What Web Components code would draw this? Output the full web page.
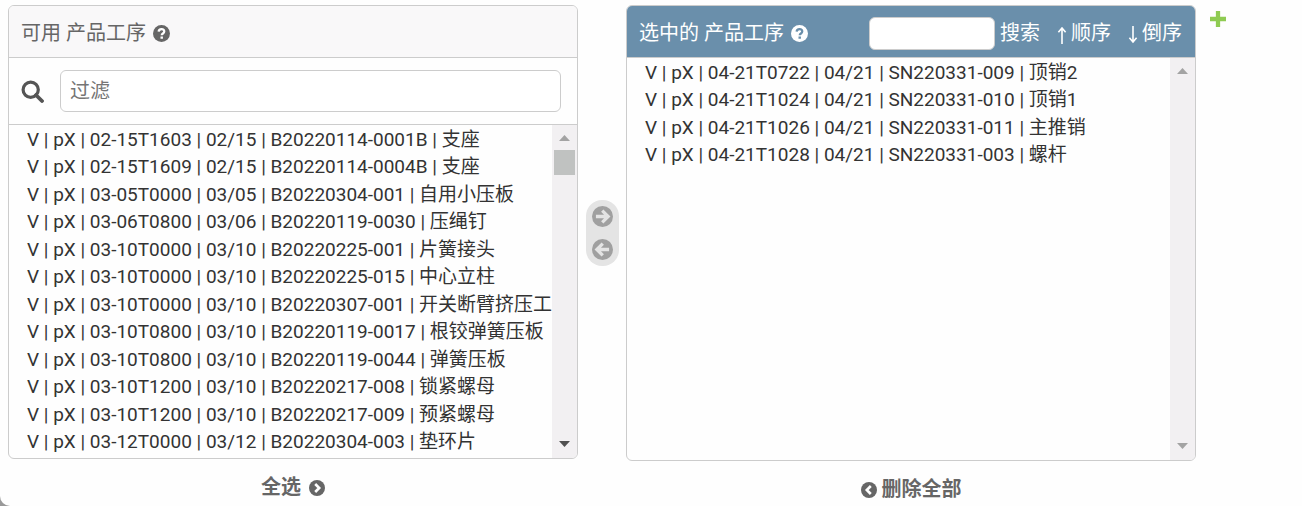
<!DOCTYPE html>
<html lang="zh-Hans">
<head>
<meta charset="utf-8">
<meta name="viewport" content="width=device-width, initial-scale=1">
<title>产品工序</title>
<style>
    html {
        background: #999;
    }

    body {
        margin: 0;
        font-family: Roboto, "Noto Sans CJK SC", sans-serif;
        font-size: 20px;
        line-height: 24px;
        color: #333;
    }
</style>
</head>
<body>
<related-widget>
    <selector-panel class="available" heading="可用 产品工序" source="available" thumb>
        <filter-box slot="filter"></filter-box>
    </selector-panel>
    <selector-chooser slot="chooser"></selector-chooser>
    <selector-panel class="chosen" slot="chosen" heading="选中的 产品工序" source="chosen">
        <sort-tools slot="tools"></sort-tools>
    </selector-panel>
    <bulk-link slot="choose-all" direction="right">全选</bulk-link>
    <bulk-link slot="remove-all" direction="left">删除全部</bulk-link>
</related-widget>

<script>
const LISTS = {
    available: [
        'V | pX | 02-15T1603 | 02/15 | B20220114-0001B | 支座',
        'V | pX | 02-15T1609 | 02/15 | B20220114-0004B | 支座',
        'V | pX | 03-05T0000 | 03/05 | B20220304-001 | 自用小压板',
        'V | pX | 03-06T0800 | 03/06 | B20220119-0030 | 压绳钉',
        'V | pX | 03-10T0000 | 03/10 | B20220225-001 | 片簧接头',
        'V | pX | 03-10T0000 | 03/10 | B20220225-015 | 中心立柱',
        'V | pX | 03-10T0000 | 03/10 | B20220307-001 | 开关断臂挤压工',
        'V | pX | 03-10T0800 | 03/10 | B20220119-0017 | 根铰弹簧压板',
        'V | pX | 03-10T0800 | 03/10 | B20220119-0044 | 弹簧压板',
        'V | pX | 03-10T1200 | 03/10 | B20220217-008 | 锁紧螺母',
        'V | pX | 03-10T1200 | 03/10 | B20220217-009 | 预紧螺母',
        'V | pX | 03-12T0000 | 03/12 | B20220304-003 | 垫环片'
    ],
    chosen: [
        'V | pX | 04-21T0722 | 04/21 | SN220331-009 | 顶销2',
        'V | pX | 04-21T1024 | 04/21 | SN220331-010 | 顶销1',
        'V | pX | 04-21T1026 | 04/21 | SN220331-011 | 主推销',
        'V | pX | 04-21T1028 | 04/21 | SN220331-003 | 螺杆'
    ]
};

// Round icon with a cut-out glyph: help, arrows and chevrons
class RoundIcon extends HTMLElement {
    constructor() {
        super();
        this.attachShadow({ mode: 'open' });
        const glyphs = {
            help: '<path d="M5.3 6.3C5.4 4.7 6.5 3.8 8 3.8c1.5 0 2.6.9 2.6 2.3 0 1.9-2.4 1.9-2.4 3.6" stroke-width="2.1"/><path d="M8.2 10.8v2.2" stroke-width="2.3"/>',
            'arrow-right': '<path d="M3 8h8.8M7.8 3.5 12.3 8l-4.5 4.5" stroke-width="2.5"/>',
            'arrow-left': '<path d="M13 8H4.2M8.2 3.5 3.7 8l4.5 4.5" stroke-width="2.5"/>',
            'chevron-right': '<path d="M6.2 4 10.2 8l-4 4" stroke-width="2.6"/>',
            'chevron-left': '<path d="M9.8 4 5.8 8l4 4" stroke-width="2.6"/>'
        };
        this.shadowRoot.innerHTML = `
            <style>
                :host {
                    display: block;
                    flex: none;
                    width: var(--icon-size, 17px);
                    height: var(--icon-size, 17px);
                }
                svg {
                    display: block;
                    width: 100%;
                    height: 100%;
                }
                circle { fill: var(--icon-color, #666); }
                path { fill: none; stroke: var(--icon-glyph, #fff); }
            </style>
            <svg viewBox="0 0 16 16" aria-hidden="true">
                <circle cx="8" cy="8" r="8"/>
                ${glyphs[this.getAttribute('name')] || ''}
            </svg>
        `;
    }
}

class ScrollRail extends HTMLElement {
    constructor() {
        super();
        this.attachShadow({ mode: 'open' });
        this.shadowRoot.innerHTML = `
            <style>
                :host {
                    display: flex;
                    flex-direction: column;
                    align-items: center;
                    flex: none;
                    width: 25px;
                    background: #f2f0f2;
                }
                svg {
                    flex: none;
                    display: block;
                    width: 11px;
                    height: 6px;
                    margin: 10px 0 9px;
                    fill: #a3a3a3;
                }
                .down { margin-bottom: 11px; }
                .thumb {
                    display: none;
                    width: 21px;
                    height: 25px;
                    background: #c0c2c1;
                }
                .space { flex: 1; }
                :host([thumb]) .thumb { display: block; }
                :host([thumb]) .down { fill: #505050; }
            </style>
            <svg viewBox="0 0 11 6" aria-hidden="true"><path d="M0 6 5.5 0 11 6z"/></svg>
            <div class="thumb"></div>
            <div class="space"></div>
            <svg class="down" viewBox="0 0 11 6" aria-hidden="true"><path d="M0 0h11L5.5 6z"/></svg>
        `;
    }
}

class FilterBox extends HTMLElement {
    constructor() {
        super();
        this.attachShadow({ mode: 'open' });
        this.shadowRoot.innerHTML = `
            <style>
                :host {
                    display: flex;
                    align-items: center;
                    gap: 16px;
                    padding: 12px 16px 12px 12px;
                    border-bottom: 1px solid #ccc;
                }
                svg {
                    display: block;
                    width: 23px;
                    height: 23px;
                    fill: none;
                    stroke: #555;
                }
                input {
                    box-sizing: border-box;
                    flex: 1;
                    min-width: 0;
                    height: 42px;
                    padding: 0 9px;
                    border: 1px solid #ccc;
                    border-radius: 6px;
                    background: #fff;
                    color: #333;
                    font: inherit;
                }
                input::placeholder { color: #757575; }
            </style>
            <label for="filter" aria-label="过滤">
                <svg viewBox="0 0 23 23" aria-hidden="true">
                    <circle cx="9.7" cy="9.7" r="7.6" stroke-width="3.2"/>
                    <path d="m15 15 6 6" stroke-width="3.8" stroke-linecap="round"/>
                </svg>
            </label>
            <input id="filter" type="text" placeholder="过滤">
        `;
    }
}

class SortTools extends HTMLElement {
    constructor() {
        super();
        this.attachShadow({ mode: 'open' });
        this.shadowRoot.innerHTML = `
            <style>
                :host {
                    display: flex;
                    align-items: center;
                    gap: 16px;
                    white-space: nowrap;
                }
                .search {
                    display: flex;
                    align-items: center;
                    gap: 5px;
                }
                input {
                    box-sizing: border-box;
                    width: 126px;
                    height: 33px;
                    padding: 0 8px;
                    border: 1px solid #ccc;
                    border-radius: 6px;
                    background: #fff;
                    font: inherit;
                }
                a {
                    display: flex;
                    align-items: center;
                    gap: 3px;
                    color: inherit;
                    text-decoration: none;
                }
                svg {
                    width: 12px;
                    height: 18px;
                    margin-top: 4px;
                    fill: none;
                    stroke: currentColor;
                    stroke-width: 1.6;
                }
            </style>
            <div class="search">
                <input id="search" type="text" aria-label="搜索">
                <a href="#search">搜索</a>
            </div>
            <a href="#asc"><svg viewBox="0 0 12 18" aria-hidden="true"><path d="M6 18V2M2.4 6.2 6 2l3.6 4.2"/></svg>顺序</a>
            <a href="#desc"><svg viewBox="0 0 12 18" aria-hidden="true"><path d="M6 0v16M2.4 11.8 6 16l3.6-4.2"/></svg>倒序</a>
        `;
    }
}

class SelectorPanel extends HTMLElement {
    constructor() {
        super();
        this.attachShadow({ mode: 'open' });
        this.shadowRoot.innerHTML = `
            <style>
                :host {
                    display: flex;
                    flex-direction: column;
                    box-sizing: border-box;
                    min-width: 0;
                    border: 1px solid #ccc;
                    border-radius: 6px;
                    overflow: hidden;
                    background: #fefefe;
                }
                header {
                    display: flex;
                    align-items: center;
                    gap: 7px;
                    height: 48px;
                    padding: 3px 13px 0 12px;
                    border-bottom: 1px solid #ccc;
                    background: #f9f8f9;
                    color: #666;
                    white-space: nowrap;
                }
                :host(.chosen) header {
                    background: #6a8fab;
                    color: #fff;
                    --icon-color: #fff;
                    --icon-glyph: #6a8fab;
                }
                slot[name="tools"] {
                    display: block;
                    margin-left: auto;
                }
                .list {
                    display: flex;
                    flex: 1;
                    min-height: 333px;
                }
                select {
                    flex: 1;
                    min-width: 0;
                    margin: 0;
                    padding: 0;
                    border: 0;
                    border-radius: 0;
                    outline: 0;
                    background: transparent;
                    color: #333;
                    font: inherit;
                    font-size: 19px;
                    scrollbar-width: none;
                }
                option {
                    display: flex;
                    align-items: center;
                    box-sizing: border-box;
                    height: 27px;
                    min-height: 0;
                    padding: 0 0 4px 18px;
                }
                option:nth-child(odd) { height: 28px; }
            </style>
            <header>
                <label for="items">${this.getAttribute('heading')}</label>
                <round-icon name="help"></round-icon>
                <slot name="tools"></slot>
            </header>
            <slot name="filter"></slot>
            <div class="list">
                <select id="items" multiple></select>
                <scroll-rail></scroll-rail>
            </div>
        `;
        const select = this.shadowRoot.querySelector('select');
        LISTS[this.getAttribute('source')].forEach(text => select.add(new Option(text)));
        this.shadowRoot.querySelector('scroll-rail').toggleAttribute('thumb', this.hasAttribute('thumb'));
    }
}

class SelectorChooser extends HTMLElement {
    constructor() {
        super();
        this.attachShadow({ mode: 'open' });
        this.shadowRoot.innerHTML = `
            <style>
                :host {
                    display: flex;
                    flex-direction: column;
                    gap: 12px;
                    padding: 6px;
                    border-radius: 16px;
                    background: #e4e4e4;
                    --icon-size: 21px;
                    --icon-color: #a0a0a0;
                    --icon-glyph: #e4e4e4;
                }
                button {
                    display: block;
                    padding: 0;
                    border: 0;
                    background: none;
                    cursor: pointer;
                }
            </style>
            <button type="button" aria-label="选择"><round-icon name="arrow-right"></round-icon></button>
            <button type="button" aria-label="删除"><round-icon name="arrow-left"></round-icon></button>
        `;
    }
}

class BulkLink extends HTMLElement {
    constructor() {
        super();
        this.attachShadow({ mode: 'open' });
        const direction = this.getAttribute('direction');
        this.shadowRoot.innerHTML = `
            <style>
                :host {
                    display: flex;
                    justify-content: center;
                    --icon-size: 16px;
                }
                a {
                    display: flex;
                    align-items: center;
                    gap: 8px;
                    color: #666;
                    font-weight: bold;
                    text-decoration: none;
                }
                :host([direction="left"]) a {
                    flex-direction: row-reverse;
                    gap: 5px;
                }
                round-icon { margin-top: 2px; }
            </style>
            <a href="#all"><slot></slot><round-icon name="chevron-${direction}"></round-icon></a>
        `;
    }
}

class RelatedWidget extends HTMLElement {
    constructor() {
        super();
        this.attachShadow({ mode: 'open' });
        this.shadowRoot.innerHTML = `
            <style>
                :host {
                    display: block;
                    box-sizing: border-box;
                    min-height: 100vh;
                    padding: 5px 76px 0 8px;
                    border-bottom-left-radius: 10px;
                    background: #fefefe;
                }
                .grid {
                    display: grid;
                    grid-template-columns: minmax(0, 1fr) 48px minmax(0, 1fr) 30px;
                }
                .column {
                    display: flex;
                    flex-direction: column;
                    gap: 16px;
                }
                ::slotted(.chosen) { min-height: 456px; }
                .middle {
                    display: flex;
                    align-items: flex-start;
                    justify-content: center;
                    padding-top: 195px;
                }
                .add {
                    justify-self: end;
                    align-self: start;
                    padding-top: 6px;
                }
                .add svg {
                    display: block;
                    width: 16px;
                    height: 16px;
                    fill: #8fcb52;
                }
            </style>
            <div class="grid">
                <div class="column">
                    <slot></slot>
                    <slot name="choose-all"></slot>
                </div>
                <div class="middle"><slot name="chooser"></slot></div>
                <div class="column">
                    <slot name="chosen"></slot>
                    <slot name="remove-all"></slot>
                </div>
                <a class="add" href="#add" aria-label="增加">
                    <svg viewBox="0 0 15 15" aria-hidden="true"><path d="M5.5 0h4v5.5H15v4H9.5V15h-4V9.5H0v-4h5.5z"/></svg>
                </a>
            </div>
        `;
    }
}

customElements.define('round-icon', RoundIcon);
customElements.define('scroll-rail', ScrollRail);
customElements.define('filter-box', FilterBox);
customElements.define('sort-tools', SortTools);
customElements.define('selector-panel', SelectorPanel);
customElements.define('selector-chooser', SelectorChooser);
customElements.define('bulk-link', BulkLink);
customElements.define('related-widget', RelatedWidget);
</script>
</body>
</html>
